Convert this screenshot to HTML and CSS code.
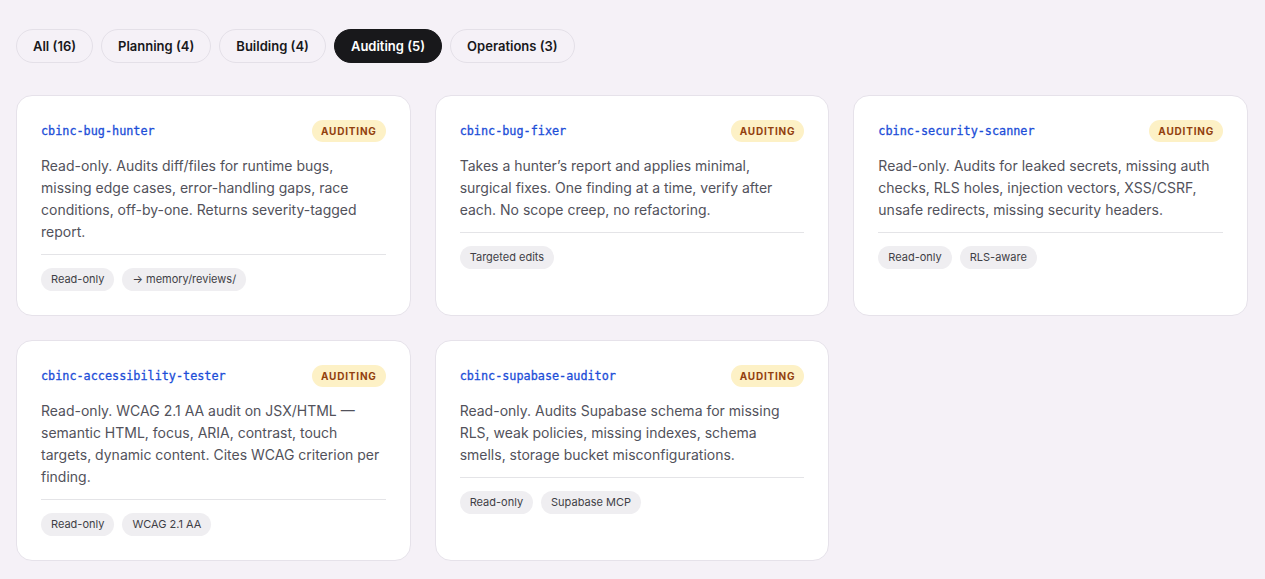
FILE: index.html
```html
<!DOCTYPE html>
<html lang="en">
<head>
    <meta charset="UTF-8">
    <meta name="viewport" content="width=device-width, initial-scale=1.0">
    <title>Agents</title>
    <link rel="stylesheet" href="styles.css">
</head>
<body>
    <div class="tabs">
        <button class="tab">All (16)</button>
        <button class="tab">Planning (4)</button>
        <button class="tab">Building (4)</button>
        <button class="tab active">Auditing (5)</button>
        <button class="tab">Operations (3)</button>
    </div>

    <div class="grid">
        <div class="card">
            <div class="card-head">
                <span class="name">cbinc-bug-hunter</span>
                <span class="badge">Auditing</span>
            </div>
            <p class="desc">Read-only. Audits diff/files for runtime bugs, missing edge cases, error-handling gaps, race conditions, off-by-one. Returns severity-tagged report.</p>
            <div class="tags">
                <span class="tag">Read-only</span>
                <span class="tag">→ memory/reviews/</span>
            </div>
        </div>

        <div class="card">
            <div class="card-head">
                <span class="name">cbinc-bug-fixer</span>
                <span class="badge">Auditing</span>
            </div>
            <p class="desc">Takes a hunter’s report and applies minimal, surgical fixes. One finding at a time, verify after each. No scope creep, no refactoring.</p>
            <div class="tags">
                <span class="tag">Targeted edits</span>
            </div>
        </div>

        <div class="card">
            <div class="card-head">
                <span class="name">cbinc-security-scanner</span>
                <span class="badge">Auditing</span>
            </div>
            <p class="desc">Read-only. Audits for leaked secrets, missing auth checks, RLS holes, injection vectors, XSS/CSRF, unsafe redirects, missing security headers.</p>
            <div class="tags">
                <span class="tag">Read-only</span>
                <span class="tag">RLS-aware</span>
            </div>
        </div>

        <div class="card">
            <div class="card-head">
                <span class="name">cbinc-accessibility-tester</span>
                <span class="badge">Auditing</span>
            </div>
            <p class="desc">Read-only. WCAG 2.1 AA audit on JSX/HTML — semantic HTML, focus, ARIA, contrast, touch targets, dynamic content. Cites WCAG criterion per finding.</p>
            <div class="tags">
                <span class="tag">Read-only</span>
                <span class="tag">WCAG 2.1 AA</span>
            </div>
        </div>

        <div class="card">
            <div class="card-head">
                <span class="name">cbinc-supabase-auditor</span>
                <span class="badge">Auditing</span>
            </div>
            <p class="desc">Read-only. Audits Supabase schema for missing RLS, weak policies, missing indexes, schema smells, storage bucket misconfigurations.</p>
            <div class="tags">
                <span class="tag">Read-only</span>
                <span class="tag">Supabase MCP</span>
            </div>
        </div>
    </div>
</body>
</html>
```

FILE: styles.css
```css
body {
    margin: 0;
    padding: 29px 17px 16px 16px;
    background-color: #f5f1f7;
    font-family: 'Inter', sans-serif;
    color: #18181b;
}

.tabs {
    display: flex;
    gap: 8px;
    margin-bottom: 32px;
}

.tab {
    height: 34px;
    padding: 0 16px;
    border: 1px solid #e4e0e8;
    border-radius: 17px;
    background-color: #f5f1f7;
    font-family: 'Inter', sans-serif;
    font-size: 13px;
    font-weight: 600;
    color: #18181b;
}

.tab.active {
    background-color: #18181b;
    border-color: #18181b;
    color: #fff;
}

.grid {
    display: grid;
    grid-template-columns: repeat(3, 1fr);
    gap: 24px;
}

.card {
    display: flex;
    flex-direction: column;
    background-color: #fff;
    border: 1px solid #e6e2ea;
    border-radius: 16px;
    padding: 24px;
}

.card-head {
    display: flex;
    justify-content: space-between;
    align-items: center;
    height: 22px;
}

.name {
    font-family: 'DejaVu Sans Mono', monospace;
    font-size: 11.8px;
    font-weight: 400;
    color: #1d4ed8;
    -webkit-text-stroke: 0.3px #1d4ed8;
}

.badge {
    height: 22px;
    line-height: 22px;
    padding: 0 9px;
    border-radius: 11px;
    background-color: #fdf1c6;
    color: #92400e;
    font-size: 10px;
    font-weight: 700;
    letter-spacing: 0.8px;
    text-transform: uppercase;
}

.desc {
    margin: 13px 0 0 0;
    padding-bottom: 11px;
    border-bottom: 1px solid #e4e4e7;
    font-size: 14px;
    line-height: 22px;
    color: #52525b;
}

.tags {
    display: flex;
    gap: 8px;
    margin-top: 13px;
}

.tag {
    height: 23px;
    line-height: 23px;
    padding: 0 10px;
    border-radius: 12px;
    background-color: #efeef1;
    font-size: 11px;
    color: #3f3f46;
}
```
